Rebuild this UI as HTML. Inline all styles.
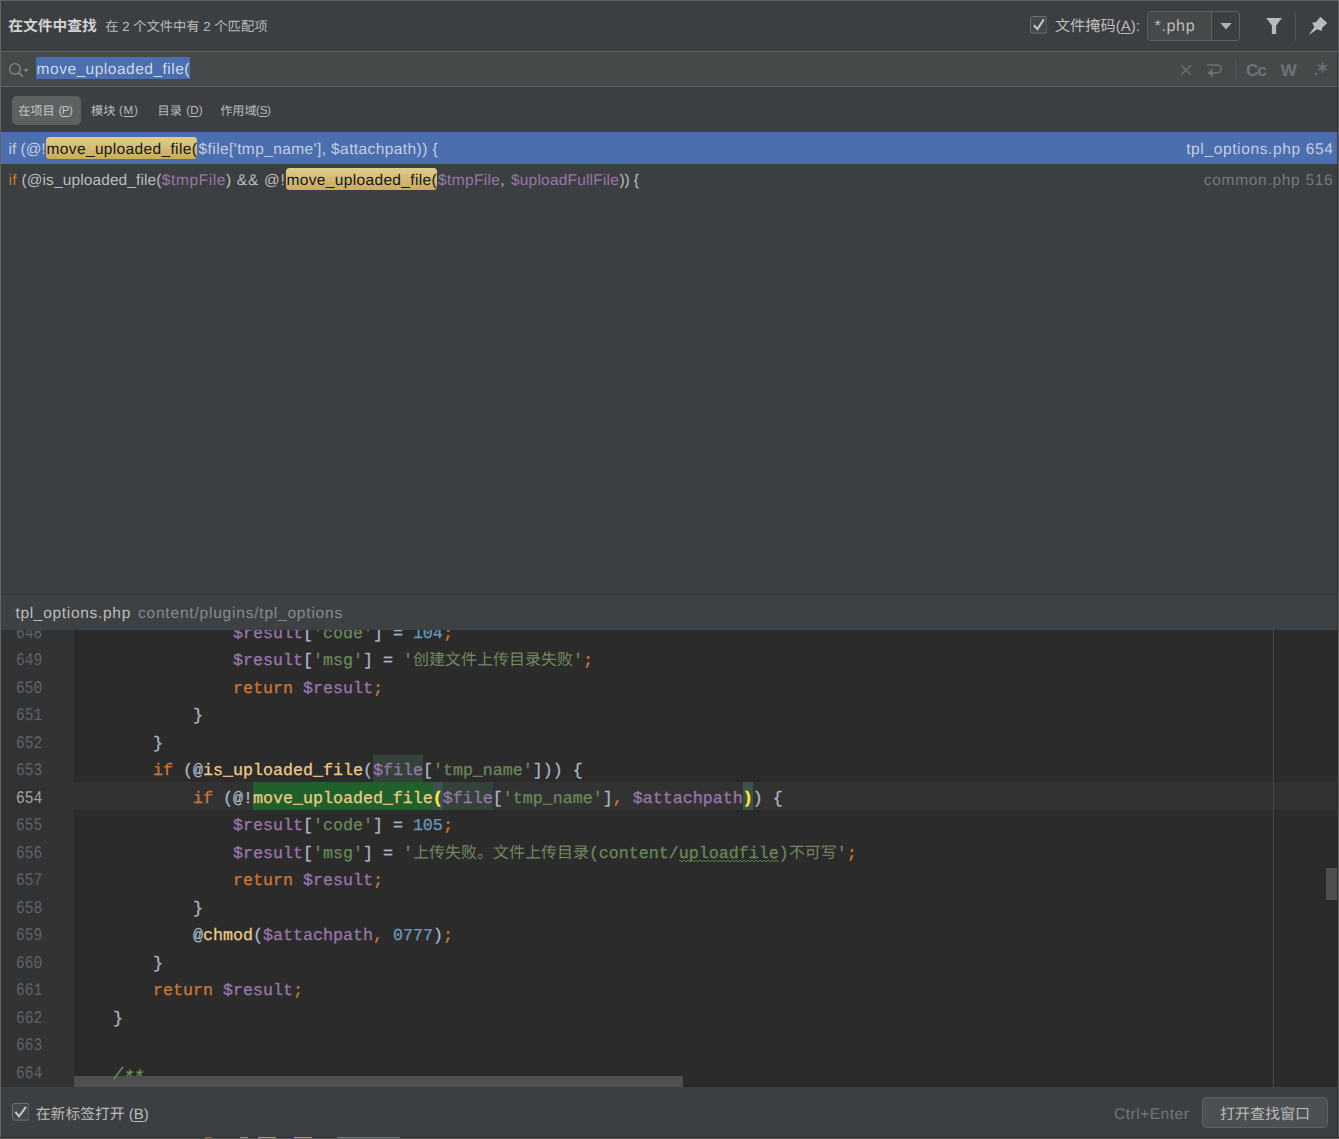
<!DOCTYPE html>
<html lang="zh-CN"><head><meta charset="utf-8"><title>在文件中查找</title>
<style>
html,body{margin:0;padding:0;background:#3c3f41}
body{width:1339px;height:1139px;overflow:hidden;position:relative;text-rendering:geometricPrecision;font-family:"Liberation Sans",sans-serif;font-size:15px;color:#bbb}
.a{position:absolute;white-space:pre;margin:0}
u{text-decoration:underline;text-underline-offset:1.5px;text-decoration-thickness:1px}
.sp{white-space:pre}
.cj{display:inline-block;vertical-align:baseline;white-space:nowrap;letter-spacing:0;font-family:"Liberation Sans","Noto Sans CJK SC",sans-serif}
pre.cl .cj{font-family:"Liberation Mono","Noto Sans CJK SC",monospace;color:#71895f;-webkit-text-stroke:0}
.combo{box-sizing:border-box;border:1px solid #5f6264;border-radius:3.5px;background:#3c3f41}
.combo .cl{position:absolute;left:0;top:0;width:63.4px;height:100%;background:#45494a;border-right:1px solid #5f6264;border-radius:2.5px 0 0 2.5px}
.ed{background:#2b2b2b;overflow:hidden}
.ln,pre.cl{font-family:"Liberation Mono",monospace;font-size:16.664px;line-height:27.5px}
pre.cl{color:#a9b7c6;-webkit-text-stroke:0.3px}
.ln{color:#606366;font-size:17.8px;transform:scaleX(0.82);transform-origin:0 50%}
.ln.cur{color:#a4a3a3}
.sr{background:#20602a;color:#ebc985}
.br{color:#ffef28;background:#3b514d;font-weight:bold}
.idc{background:#354239}
.typo{background:repeating-linear-gradient(90deg,#557f48 0 2px,transparent 2px 4px) 0 calc(100% - 2.6px)/100% 1px no-repeat,repeating-linear-gradient(90deg,transparent 0 2px,#557f48 2px 4px) 0 calc(100% - 1.6px)/100% 1px no-repeat}
</style></head>
<body>
<header>
<div class="a" style="left:8.30px;top:17px;font-size:15px;line-height:20px;color:#d2d2d2;"><span class="cj" style="width:88.50px;font-size:14.75px;font-weight:bold">在文件中查找</span></div>
<div class="a" style="left:105.20px;top:17px;font-size:13.2px;line-height:20px;color:#bbbbbb;--dy:0.40px;"><span class="cj" style="width:13.30px;font-size:13.3px">在</span><span class="sp"> 2 </span><span class="cj" style="width:66.50px;font-size:13.3px">个文件中有</span><span class="sp"> 2 </span><span class="cj" style="width:53.20px;font-size:13.3px">个匹配项</span></div>
<svg class="a" style="left:1029.6px;top:16.3px" width="17.6" height="17.6" viewBox="0 0 17.6 17.6"><rect x="0.5" y="0.5" width="16.6" height="16.6" rx="2.2" fill="#43494a" stroke="#6f7274"/><path d="M3.8 9.2 L7.4 13.1 L13.9 3.4" fill="none" stroke="#c4c4c4" stroke-width="2.1"/></svg>
<div class="a" style="left:1054.90px;top:17px;font-size:15px;line-height:20px;color:#bbbbbb;"><span class="cj" style="width:60.80px;font-size:15.2px">文件掩码</span>(<u>A</u>):</div>
<div class="a combo" style="left:1147px;top:10.6px;width:92.6px;height:30.4px"><div class="cl"></div><svg class="a" style="left:72px;top:11.6px" width="12" height="7" viewBox="0 0 12 7"><path d="M0.3 0 H11.7 L6 6.5Z" fill="#b0b0b0"/></svg></div>
<div class="a" style="left:1154.60px;top:16px;font-size:16.1px;line-height:20px;color:#bbbbbb;letter-spacing:0.600px;">*.php</div>
<svg class="a" style="left:1265px;top:17px" width="18" height="18" viewBox="0 0 18 18"><path d="M1.2 1 H16.9 L11.1 8.4 V16.9 H6.9 V8.4Z" fill="#b9bbbd"/></svg>
<div class="a" style="left:1295px;top:11.5px;width:1px;height:29px;background:#4f5355;"></div>
<svg class="a" style="left:1307px;top:15px" width="22" height="22" viewBox="0 0 22 22"><path d="M13.45 1.8 L20.2 8.1 L15.3 12.7 L14.6 16.1 L10.3 14.3 L1.7 20.1 L7.4 12.1 L5.1 7.4 L8.9 7.2Z" fill="#b9bbbd"/></svg>
</header>
<div class="a" style="left:1px;top:50.8px;width:1337px;height:36.2px;background:#45494a;border-top:1.3px solid #616566;border-bottom:1px solid #616566;box-sizing:border-box"></div>
<svg class="a" style="left:8px;top:62px" width="24" height="18" viewBox="0 0 24 18"><circle cx="6.9" cy="6.9" r="5.3" fill="none" stroke="#80878a" stroke-width="1.4"/><path d="M10.8 10.8 L14.9 14.7" stroke="#80878a" stroke-width="1.7"/><path d="M15.3 7.1 H20.9 L18.1 10.3Z" fill="#80878a"/></svg>
<div class="a" style="left:35.8px;top:57px;width:154.6px;height:21.8px;background:#4b6eaf;"></div>
<div class="a" style="left:36.60px;top:60px;font-size:15.5px;line-height:20px;color:#d0d8e6;letter-spacing:0.500px;">move_uploaded_file(</div>
<svg class="a" style="left:1180px;top:64px" width="12" height="12" viewBox="0 0 12 12"><path d="M1.2 1.2 L10.8 10.8 M10.8 1.2 L1.2 10.8" stroke="#6c7275" stroke-width="1.3" fill="none"/></svg>
<svg class="a" style="left:1205px;top:62px" width="18" height="16" viewBox="0 0 18 16"><path d="M2 3 H12.2 A4 4 0 0 1 12.2 11 H5" fill="none" stroke="#6c7275" stroke-width="1.5"/><path d="M7.6 6.6 L2.6 11 L7.6 15.2Z" fill="#6c7275"/></svg>
<div class="a" style="left:1235px;top:59.5px;width:1px;height:20.5px;background:#525758;"></div>
<div class="a" style="left:1246.00px;top:60px;font-size:17.2px;line-height:20px;color:#6c7275;font-weight:bold;letter-spacing:-1.1px;">Cc</div>
<div class="a" style="left:1280.60px;top:60px;font-size:17.2px;line-height:20px;color:#6c7275;font-weight:bold;">W</div>
<svg class="a" style="left:1313px;top:61px" width="16" height="16" viewBox="0 0 16 16"><g stroke="#6c7275" stroke-width="1.7" fill="none"><path d="M9.6 1.5 V11.5 M5.2 4 L14 9 M14 4 L5.2 9"/></g><rect x="1.8" y="11.8" width="2.2" height="2.2" fill="#6c7275"/></svg>
<nav>
<div class="a" style="left:12.3px;top:95.7px;width:68.7px;height:29.2px;background:#5c6162;border-radius:5px"></div>
<div class="a" style="left:18.20px;top:101px;font-size:12px;line-height:20px;color:#c6c6c6;"><span class="cj" style="width:36.60px;font-size:12.2px">在项目</span></div><div class="a" style="left:58.40px;top:101px;font-size:11.6px;line-height:20px;color:#c6c6c6;letter-spacing:-0.521px;">(<u>P</u>)</div>
<div class="a" style="left:91.00px;top:101px;font-size:12px;line-height:20px;color:#bbbbbb;"><span class="cj" style="width:24.40px;font-size:12.2px">模块</span></div><div class="a" style="left:119.00px;top:101px;font-size:11.6px;line-height:20px;color:#bbbbbb;letter-spacing:0.704px;">(<u>M</u>)</div>
<div class="a" style="left:157.60px;top:101px;font-size:12px;line-height:20px;color:#bbbbbb;"><span class="cj" style="width:24.40px;font-size:12.2px">目录</span></div><div class="a" style="left:186.20px;top:101px;font-size:11.6px;line-height:20px;color:#bbbbbb;letter-spacing:0.132px;">(<u>D</u>)</div>
<div class="a" style="left:220.20px;top:101px;font-size:12px;line-height:20px;color:#bbbbbb;"><span class="cj" style="width:36.60px;font-size:12.2px">作用域</span></div><div class="a" style="left:256.10px;top:101px;font-size:11.6px;line-height:20px;color:#bbbbbb;letter-spacing:-0.321px;">(<u>S</u>)</div>
</nav>
<main>
<div class="a" style="left:1px;top:132.2px;width:1336.5px;height:31.4px;background:#4b6eaf;"></div>
<div class="a" style="left:8.60px;top:140px;font-size:15.5px;line-height:20px;color:#c3cde0;letter-spacing:-0.043px;">if (@!</div>
<div class="a" style="left:45.8px;top:137.4px;width:151.7px;height:21.2px;background:linear-gradient(#dfcd8c,#c9ab5b);border-radius:3.5px"></div>
<div class="a" style="left:46.60px;top:140px;font-size:15.5px;line-height:20px;color:#15161a;letter-spacing:0.352px;">move_uploaded_file(</div>
<div class="a" style="left:198.60px;top:140px;font-size:15.5px;line-height:20px;color:#c3cde0;letter-spacing:0.405px;">$file['tmp_name'], $attachpath)) {</div>
<div class="a" style="left:1186.20px;top:140px;font-size:15.5px;line-height:20px;color:#c3cde0;letter-spacing:0.626px;">tpl_options.php 654</div>
<div class="a" style="left:8.60px;top:171px;font-size:15.5px;line-height:20px;color:#cc7832;letter-spacing:0.325px;">if</div>
<div class="a" style="left:17.00px;top:171px;font-size:15.5px;line-height:20px;color:#bbbbbb;letter-spacing:0.110px;"> (@is_uploaded_file(</div>
<div class="a" style="left:161.80px;top:171px;font-size:15.5px;line-height:20px;color:#9876aa;letter-spacing:0.596px;">$tmpFile</div>
<div class="a" style="left:226.00px;top:171px;font-size:15.5px;line-height:20px;color:#bbbbbb;letter-spacing:0.701px;">) &amp;&amp; @!</div>
<div class="a" style="left:285.7px;top:168.4px;width:151.5px;height:21.2px;background:linear-gradient(#dfcd8c,#c9ab5b);border-radius:3.5px"></div>
<div class="a" style="left:286.50px;top:171px;font-size:15.5px;line-height:20px;color:#15161a;letter-spacing:0.347px;">move_uploaded_file(</div>
<div class="a" style="left:438.00px;top:171px;font-size:15.5px;line-height:20px;color:#9876aa;letter-spacing:0.358px;">$tmpFile</div>
<div class="a" style="left:500.30px;top:171px;font-size:15.5px;line-height:20px;color:#bbbbbb;letter-spacing:-0.006px;">,</div>
<div class="a" style="left:506.50px;top:171px;font-size:15.5px;line-height:20px;color:#9876aa;letter-spacing:0.192px;"> $uploadFullFile</div>
<div class="a" style="left:619.40px;top:171px;font-size:15.5px;line-height:20px;color:#bbbbbb;letter-spacing:-0.052px;">)) {</div>
<div class="a" style="left:1203.80px;top:171px;font-size:15.5px;line-height:20px;color:#787878;letter-spacing:0.702px;">common.php 516</div>
</main>
<section>
<div class="a" style="left:1px;top:593.6px;width:1337px;height:36.4px;background:#3e4143;border-top:1px solid #333637;box-sizing:border-box"></div>
<div class="a" style="left:15.40px;top:604px;font-size:15.5px;line-height:20px;color:#bbbbbb;letter-spacing:0.697px;">tpl_options.php</div>
<div class="a" style="left:138.00px;top:604px;font-size:15.5px;line-height:20px;color:#8a8a8a;letter-spacing:0.794px;">content/plugins/tpl_options</div>
<div class="a ed" style="left:1px;top:630px;width:1337px;height:456.5px">
<div class="a" style="left:0px;top:152px;width:1337px;height:28px;background:#323232;"></div>
<div class="a" style="left:0px;top:0px;width:72.8px;height:456.5px;background:#313335;"></div>
<div class="a" style="left:0px;top:152px;width:72.8px;height:28px;background:#323232;"></div>
<div class="a" style="left:1272.3px;top:0px;width:1px;height:456.5px;background:#484848;"></div>
<div class="a ln" style="left:15.0px;top:-9px">648</div>
<pre class="a cl" style="left:72.0px;top:-9px">                <span style="color:#9876aa">$result</span>[<span style="color:#6a8759">'code'</span>] = <span style="color:#6897bb">104</span><span style="color:#cc7832">;</span></pre>
<div class="a ln" style="left:15.0px;top:18px">649</div>
<pre class="a cl" style="left:72.0px;top:18px">                <span style="color:#9876aa">$result</span>[<span style="color:#6a8759">'msg'</span>] = <span style="color:#6a8759">'</span><span class="cj" style="width:160.00px;font-size:16px">创建文件上传目录失败</span><span style="color:#6a8759">'</span><span style="color:#cc7832">;</span></pre>
<div class="a ln" style="left:15.0px;top:46px">650</div>
<pre class="a cl" style="left:72.0px;top:46px">                <span style="color:#cc7832">return </span><span style="color:#9876aa">$result</span><span style="color:#cc7832">;</span></pre>
<div class="a ln" style="left:15.0px;top:73px">651</div>
<pre class="a cl" style="left:72.0px;top:73px">            }</pre>
<div class="a ln" style="left:15.0px;top:101px">652</div>
<pre class="a cl" style="left:72.0px;top:101px">        }</pre>
<div class="a ln" style="left:15.0px;top:128px">653</div>
<pre class="a cl" style="left:72.0px;top:128px">        <span style="color:#cc7832">if</span> (@<span style="color:#ebc985">is_uploaded_file</span>(<span class="idc" style="padding:7.10px 0 1.02px;color:#9876aa">$file</span>[<span style="color:#6a8759">'tmp_name'</span>])) {</pre>
<div class="a ln cur" style="left:15.0px;top:156px">654</div>
<pre class="a cl" style="left:72.0px;top:156px">            <span style="color:#cc7832">if</span> (@!<span class="sr" style="padding:8.10px 0 1.02px;">move_uploaded_file</span><span class="br" style="padding:8.10px 0 1.02px;">(</span><span class="idc" style="padding:8.10px 0 1.02px;color:#9876aa">$file</span>[<span style="color:#6a8759">'tmp_name'</span>]<span style="color:#cc7832">,</span> <span style="color:#9876aa">$attachpath</span><span class="br" style="padding:8.10px 0 1.02px;">)</span>) {</pre>
<div class="a ln" style="left:15.0px;top:183px">655</div>
<pre class="a cl" style="left:72.0px;top:183px">                <span style="color:#9876aa">$result</span>[<span style="color:#6a8759">'code'</span>] = <span style="color:#6897bb">105</span><span style="color:#cc7832">;</span></pre>
<div class="a ln" style="left:15.0px;top:211px">656</div>
<pre class="a cl" style="left:72.0px;top:211px">                <span style="color:#9876aa">$result</span>[<span style="color:#6a8759">'msg'</span>] = <span style="color:#6a8759">'</span><span class="cj" style="width:176.00px;font-size:16px">上传失败。文件上传目录</span><span style="color:#6a8759">(content/</span><span class="typo" style="color:#6a8759">uploadfile</span><span style="color:#6a8759">)</span><span class="cj" style="width:48.00px;font-size:16px">不可写</span><span style="color:#6a8759">'</span><span style="color:#cc7832">;</span></pre>
<div class="a ln" style="left:15.0px;top:238px">657</div>
<pre class="a cl" style="left:72.0px;top:238px">                <span style="color:#cc7832">return </span><span style="color:#9876aa">$result</span><span style="color:#cc7832">;</span></pre>
<div class="a ln" style="left:15.0px;top:266px">658</div>
<pre class="a cl" style="left:72.0px;top:266px">            }</pre>
<div class="a ln" style="left:15.0px;top:293px">659</div>
<pre class="a cl" style="left:72.0px;top:293px">            @<span style="color:#ebc985">chmod</span>(<span style="color:#9876aa">$attachpath</span><span style="color:#cc7832">,</span> <span style="color:#6897bb">0777</span>)<span style="color:#cc7832">;</span></pre>
<div class="a ln" style="left:15.0px;top:321px">660</div>
<pre class="a cl" style="left:72.0px;top:321px">        }</pre>
<div class="a ln" style="left:15.0px;top:348px">661</div>
<pre class="a cl" style="left:72.0px;top:348px">        <span style="color:#cc7832">return </span><span style="color:#9876aa">$result</span><span style="color:#cc7832">;</span></pre>
<div class="a ln" style="left:15.0px;top:376px">662</div>
<pre class="a cl" style="left:72.0px;top:376px">    }</pre>
<div class="a ln" style="left:15.0px;top:403px">663</div>
<pre class="a cl" style="left:72.0px;top:403px"></pre>
<div class="a ln" style="left:15.0px;top:431px">664</div>
<pre class="a cl" style="left:72.0px;top:431px">    <i style="color:#629755">/<span style="position:relative;top:4px;font-size:18.5px;letter-spacing:-1.1px">**</span></i></pre>
<div class="a" style="left:73.3px;top:446px;width:609px;height:10.5px;background:rgba(110,110,110,0.55);"></div>
<div class="a" style="left:1325px;top:237.5px;width:10.5px;height:32.5px;background:#4f4f4f;"></div>
</div>
</section>
<footer>
<svg class="a" style="left:11.8px;top:1103.3px" width="17.6" height="17.6" viewBox="0 0 17.6 17.6"><rect x="0.5" y="0.5" width="16.6" height="16.6" rx="2.2" fill="#43494a" stroke="#6f7274"/><path d="M3.4 8.9 L7.0 13.3 L14.0 3.9" fill="none" stroke="#c4c4c4" stroke-width="2.0"/></svg>
<div class="a" style="left:35.80px;top:1105px;font-size:15px;line-height:20px;color:#bbbbbb;--dy:0.20px;"><span class="cj" style="width:88.80px;font-size:14.8px">在新标签打开</span> (<u>B</u>)</div>
<div class="a" style="left:1114.00px;top:1105px;font-size:15.5px;line-height:20px;color:#757575;letter-spacing:0.520px;">Ctrl+Enter</div>
<div class="a" style="left:1202.3px;top:1097.4px;width:125.6px;height:30.2px;background:#4c5052;border:1px solid #5e6264;border-radius:4.5px;box-sizing:border-box"></div>
<div class="a" style="left:1220.00px;top:1105px;font-size:15px;line-height:20px;color:#bbbbbb;--dy:0.30px;"><span class="cj" style="width:90.00px;font-size:15px">打开查找窗口</span></div>
</footer>
<div class="a" style="left:0px;top:0px;width:1339px;height:1px;background:#626466;"></div>
<div class="a" style="left:0px;top:0px;width:1px;height:1137px;background:#626466;"></div>
<div class="a" style="left:1337.2px;top:52px;width:1px;height:1085px;background:rgba(43,43,43,0.75);"></div>
<div class="a" style="left:1338.2px;top:0px;width:1px;height:1139px;background:#656565;"></div>
<div class="a" style="left:0px;top:1136.6px;width:1339px;height:1.6px;background:#2b2b2b;"></div>
<div class="a" style="left:0px;top:1138.2px;width:1339px;height:1px;background:#5f5f5f;"></div>
<div class="a" style="left:204.5px;top:1137.1px;width:7.5px;height:1.1px;background:#9a6232;"></div>
<div class="a" style="left:240px;top:1137.1px;width:8px;height:1.1px;background:#8d8f91;"></div>
<div class="a" style="left:258px;top:1137.1px;width:18px;height:1.1px;background:#a99a6a;"></div>
<div class="a" style="left:294px;top:1137.1px;width:18px;height:1.1px;background:#b08f58;"></div>
<div class="a" style="left:337px;top:1137.1px;width:63px;height:1.1px;background:#6f7477;"></div>
</body></html>
